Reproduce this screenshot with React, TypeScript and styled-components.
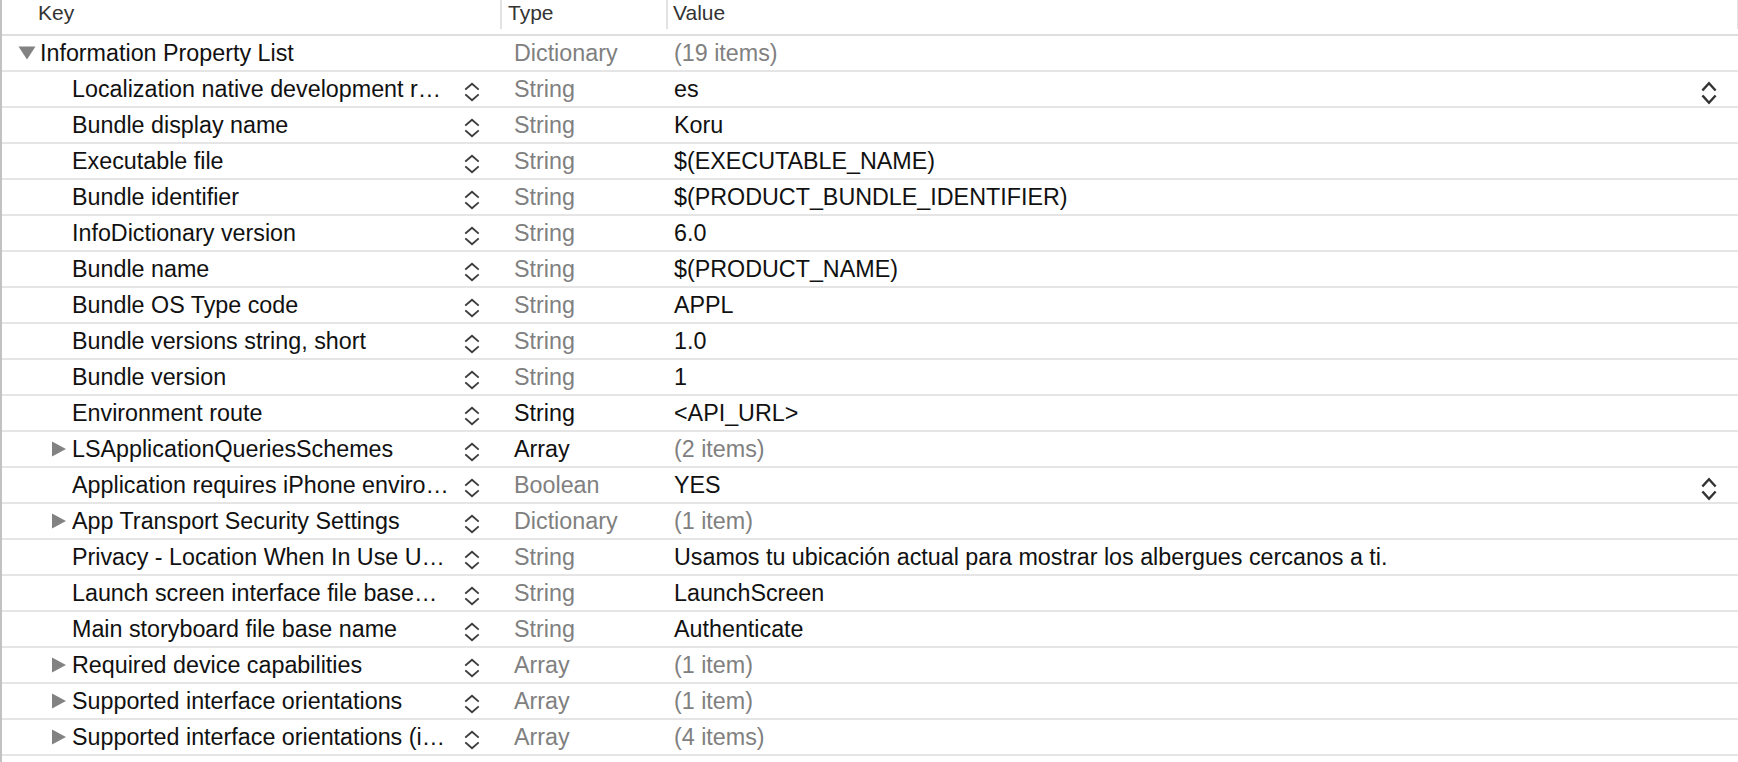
import styled, { createGlobalStyle } from 'styled-components';

const GlobalStyle = createGlobalStyle`
    html, body {
        margin: 0;
        padding: 0;
        background: #ffffff;
        overflow: hidden;
    }
    body {
        font-family: "Liberation Sans", Arial, Helvetica, sans-serif;
        -webkit-font-smoothing: antialiased;
    }
`;

type Item = {
    key: string
    level: number
    disclosure?: 'open' | 'closed'
    type: string
    strongType?: boolean
    value: string
    dimValue?: boolean
    valueStepper?: boolean
    keyStepper?: boolean
}

const items: Item[] = [
    { key: 'Information Property List', level: 0, disclosure: 'open', type: 'Dictionary', value: '(19 items)', dimValue: true, keyStepper: false },
    { key: 'Localization native development r…', level: 1, type: 'String', value: 'es', valueStepper: true },
    { key: 'Bundle display name', level: 1, type: 'String', value: 'Koru' },
    { key: 'Executable file', level: 1, type: 'String', value: '$(EXECUTABLE_NAME)' },
    { key: 'Bundle identifier', level: 1, type: 'String', value: '$(PRODUCT_BUNDLE_IDENTIFIER)' },
    { key: 'InfoDictionary version', level: 1, type: 'String', value: '6.0' },
    { key: 'Bundle name', level: 1, type: 'String', value: '$(PRODUCT_NAME)' },
    { key: 'Bundle OS Type code', level: 1, type: 'String', value: 'APPL' },
    { key: 'Bundle versions string, short', level: 1, type: 'String', value: '1.0' },
    { key: 'Bundle version', level: 1, type: 'String', value: '1' },
    { key: 'Environment route', level: 1, type: 'String', strongType: true, value: '<API_URL>' },
    { key: 'LSApplicationQueriesSchemes', level: 1, disclosure: 'closed', type: 'Array', strongType: true, value: '(2 items)', dimValue: true },
    { key: 'Application requires iPhone enviro…', level: 1, type: 'Boolean', value: 'YES', valueStepper: true },
    { key: 'App Transport Security Settings', level: 1, disclosure: 'closed', type: 'Dictionary', value: '(1 item)', dimValue: true },
    { key: 'Privacy - Location When In Use U…', level: 1, type: 'String', value: 'Usamos tu ubicación actual para mostrar los albergues cercanos a ti.' },
    { key: 'Launch screen interface file base…', level: 1, type: 'String', value: 'LaunchScreen' },
    { key: 'Main storyboard file base name', level: 1, type: 'String', value: 'Authenticate' },
    { key: 'Required device capabilities', level: 1, disclosure: 'closed', type: 'Array', value: '(1 item)', dimValue: true },
    { key: 'Supported interface orientations', level: 1, disclosure: 'closed', type: 'Array', value: '(1 item)', dimValue: true },
    { key: 'Supported interface orientations (i…', level: 1, disclosure: 'closed', type: 'Array', value: '(4 items)', dimValue: true },
];

const Editor = styled.div`
    height: 762px;
    border-left: 2px solid #c2c2c2;
    box-sizing: border-box;
    background: #ffffff;
`;

const HeaderRow = styled.div`
    display: grid;
    grid-template-columns: 498px 166px 1fr;
    height: 36px;
    box-sizing: border-box;
    border-bottom: 2px solid #dedede;
`;

const HeaderCell = styled.div<{ $first?: boolean; $last?: boolean; $pad: number }>`
    height: 29px;
    box-sizing: border-box;
    padding-left: ${p => p.$pad}px;
    border-left: ${p => (p.$first ? 'none' : '2px solid #e2e2e2')};
    border-right: ${p => (p.$last ? '1px solid #e2e2e2' : 'none')};
    font-size: 21px;
    line-height: 25px;
    color: #333333;
`;

const Row = styled.div`
    display: grid;
    grid-template-columns: 498px 166px 1fr;
    height: 36px;
    box-sizing: border-box;
    border-bottom: 2px solid #e5e5e5;
    font-size: 23.3px;
    line-height: 34px;
`;

const KeyCell = styled.div<{ $level: number }>`
    display: flex;
    align-items: center;
    min-width: 0;
    padding-left: ${p => 16 + p.$level * 32}px;
`;

const DisclosureSlot = styled.div`
    width: 22px;
    flex: none;
    display: flex;
    align-items: center;
`;

const KeyText = styled.span`
    flex: 1;
    min-width: 0;
    white-space: nowrap;
    overflow: hidden;
    text-overflow: ellipsis;
    color: #111111;
`;

const StepperBox = styled.div<{ $top: number; $right: number }>`
    flex: none;
    align-self: flex-start;
    display: flex;
    margin-top: ${p => p.$top}px;
    margin-left: 8px;
    margin-right: ${p => p.$right}px;
`;

const TypeCell = styled.div<{ $strong?: boolean }>`
    padding-left: 14px;
    white-space: nowrap;
    color: ${p => (p.$strong ? '#111111' : '#808080')};
`;

const ValueCell = styled.div<{ $dim?: boolean }>`
    display: flex;
    padding-left: 8px;
    white-space: nowrap;
    color: ${p => (p.$dim ? '#808080' : '#111111')};
`;

const ValueText = styled.span`
    flex: 1;
`;

const Disclosure = ({ state }: { state: 'open' | 'closed' }) => (
    <svg width="18" height="16" viewBox="0 0 18 16">
        {state === 'open'
            ? <polygon points="0.5,1.5 17.5,1.5 9,14.5" fill="#828282" />
            : <polygon points="2,0.5 16,8 2,15.5" fill="#828282" />}
    </svg>
);

const KeyStepper = () => (
    <svg width="16" height="20" viewBox="0 0 16 20" fill="none" stroke="#3c3c3c" strokeWidth="1.9" strokeLinecap="square">
        <path d="M2 7 L8 1.8 L14 7" />
        <path d="M2 13 L8 18.2 L14 13" />
    </svg>
);

const ValueStepper = () => (
    <svg width="16" height="24" viewBox="0 0 16 24" fill="none" stroke="#333333" strokeWidth="2.4" strokeLinecap="square">
        <path d="M2.2 8.6 L8 2.2 L13.8 8.6" />
        <path d="M2.2 15.4 L8 21.8 L13.8 15.4" />
    </svg>
);

const App = () => {
    return (
        <>
            <GlobalStyle />
            <Editor>
                <HeaderRow>
                    <HeaderCell $first $pad={36}>Key</HeaderCell>
                    <HeaderCell $pad={6}>Type</HeaderCell>
                    <HeaderCell $last $pad={5}>Value</HeaderCell>
                </HeaderRow>
                {items.map((item, i) => (
                    <Row key={i}>
                        <KeyCell $level={item.level}>
                            <DisclosureSlot>
                                {item.disclosure && <Disclosure state={item.disclosure} />}
                            </DisclosureSlot>
                            <KeyText>{item.key}</KeyText>
                            {item.keyStepper !== false && (
                                <StepperBox $top={10} $right={20}><KeyStepper /></StepperBox>
                            )}
                        </KeyCell>
                        <TypeCell $strong={item.strongType}>{item.type}</TypeCell>
                        <ValueCell $dim={item.dimValue}>
                            <ValueText>{item.value}</ValueText>
                            {item.valueStepper && (
                                <StepperBox $top={9} $right={21}><ValueStepper /></StepperBox>
                            )}
                        </ValueCell>
                    </Row>
                ))}
            </Editor>
        </>
    )
}

export default App;
